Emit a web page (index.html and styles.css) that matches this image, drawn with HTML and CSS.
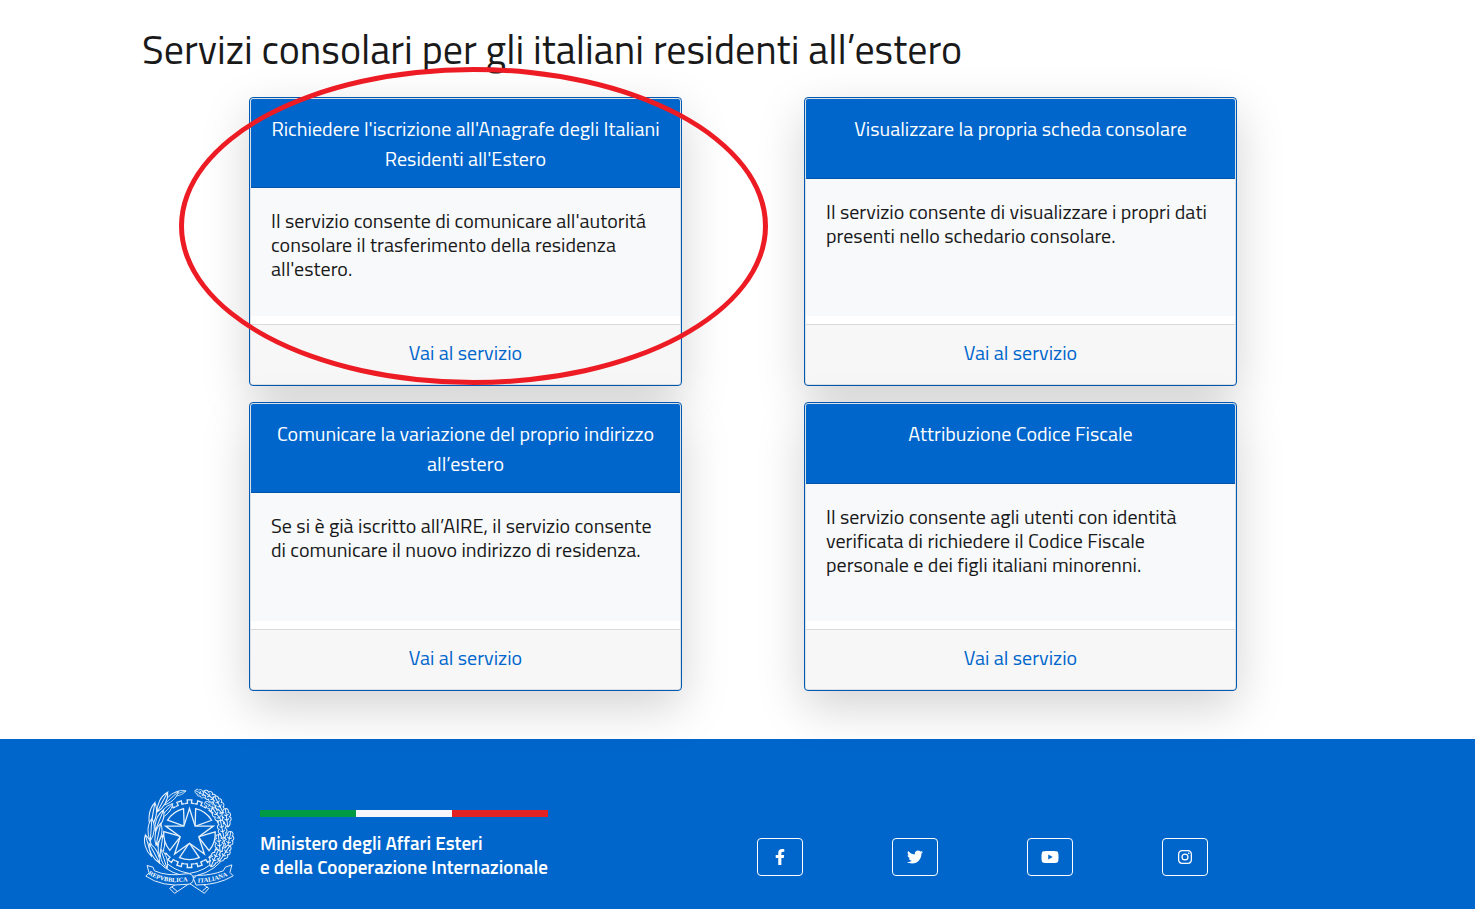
FILE: index.html
```
<!DOCTYPE html>
<html lang="it">
<head>
  <meta charset="UTF-8">
  <meta name="viewport" content="width=device-width, initial-scale=1.0">
  <title>Servizi consolari</title>
  <link rel="stylesheet" href="styles.css">
</head>
<body>
  <main class="container">
    <h1>Servizi consolari per gli italiani residenti all’estero</h1>

    <div class="services">
      <article class="card highlighted">
        <h2 class="card-header">Richiedere l'iscrizione all'Anagrafe degli Italiani Residenti all'Estero</h2>
        <p class="card-body">Il servizio consente di comunicare all'autoritá consolare il trasferimento della residenza all'estero.</p>
        <div class="card-footer"><a href="#">Vai al servizio</a></div>
      </article>

      <article class="card">
        <h2 class="card-header">Visualizzare la propria scheda consolare</h2>
        <p class="card-body">Il servizio consente di visualizzare i propri dati presenti nello schedario consolare.</p>
        <div class="card-footer"><a href="#">Vai al servizio</a></div>
      </article>

      <article class="card">
        <h2 class="card-header">Comunicare la variazione del proprio indirizzo all’estero</h2>
        <p class="card-body">Se si è già iscritto all’AIRE, il servizio consente di comunicare il nuovo indirizzo di residenza.</p>
        <div class="card-footer"><a href="#">Vai al servizio</a></div>
      </article>

      <article class="card">
        <h2 class="card-header">Attribuzione Codice Fiscale</h2>
        <p class="card-body">Il servizio consente agli utenti con identità verificata di richiedere il Codice Fiscale personale e dei figli italiani minorenni.</p>
        <div class="card-footer"><a href="#">Vai al servizio</a></div>
      </article>
    </div>
  </main>

  <footer class="footer">
    <div class="container footer-row">
      <div class="brand">
        <svg class="emblem" viewBox="40 22 273 323" aria-hidden="true">
          <defs>
            <path id="tooth" d="M-14 -91 L-6 -92 L-7 -102 L7 -102 L6 -92 L14 -91"/>
            <g id="teeth">
              <use href="#tooth"/>
              <use href="#tooth" transform="rotate(18)"/>
            </g>
            <path id="wedge" d="M-66 -41 A78 78 0 0 1 -18 -76 L-16 -23 Z"/>
            <path id="leaf" d="M0 -34 C13 -15 12 14 0 34 C-12 14 -13 -15 0 -34 V34"/>
            <path id="oak" d="M0 -28 C8 -28 10 -20 7 -16 C15 -14 15 -5 9 -2 C16 2 14 10 8 12 C10 19 5 25 0 28 C-5 25 -10 19 -8 12 C-14 10 -16 2 -9 -2 C-15 -5 -15 -14 -7 -16 C-10 -20 -8 -28 0 -28 V28 M0 -6 L7 -10 M0 -6 L-7 -10 M0 8 L7 3 M0 8 L-7 3"/>
            <path id="ribbon-left" d="M53 282 Q105 316 182 302"/>
            <path id="ribbon-right" d="M203 307 Q250 309 306 281"/>
          </defs>
          <!-- gear and star -->
          <g class="gear" transform="translate(178 160)">
            <use href="#teeth"/>
            <use href="#teeth" transform="rotate(36)"/>
            <use href="#teeth" transform="rotate(72)"/>
            <use href="#teeth" transform="rotate(108)"/>
            <use href="#teeth" transform="rotate(144)"/>
            <use href="#teeth" transform="rotate(180)"/>
            <use href="#teeth" transform="rotate(216)"/>
            <use href="#teeth" transform="rotate(252)"/>
            <use href="#teeth" transform="rotate(288)"/>
            <use href="#teeth" transform="rotate(324)"/>
            <use href="#wedge"/>
            <use href="#wedge" transform="rotate(72)"/>
            <use href="#wedge" transform="rotate(144)"/>
            <use href="#wedge" transform="rotate(216)"/>
            <use href="#wedge" transform="rotate(288)"/>
            <path d="M0 -76 L17 -23 L72 -23 L28 9 L45 61 L0 29 L-45 61 L-28 9 L-72 -23 L-17 -23 Z"/>
          </g>
          <!-- stems -->
          <path d="M84 245 Q120 285 190 292 L236 325 L223 340 L172 306 M272 245 Q236 285 168 292 L118 325 L133 340 L184 306 M124 320 L140 333 M232 320 L217 333 M100 240 Q130 272 178 280 M256 240 Q226 272 178 280"/>
          <!-- laurel -->
          <use href="#leaf" transform="translate(145 38) rotate(72) scale(.7)"/>
          <use href="#leaf" transform="translate(122 53) rotate(48) scale(.9)"/>
          <use href="#leaf" transform="translate(96 65) rotate(28)"/>
          <use href="#leaf" transform="translate(107 92) rotate(42) scale(.9)"/>
          <use href="#leaf" transform="translate(67 103) rotate(10) scale(1.1)"/>
          <use href="#leaf" transform="translate(87 120) rotate(22)"/>
          <use href="#leaf" transform="translate(62 148) rotate(4)"/>
          <use href="#leaf" transform="translate(84 162) rotate(12)"/>
          <use href="#leaf" transform="translate(54 196) rotate(-16)"/>
          <use href="#leaf" transform="translate(93 197) rotate(8)"/>
          <use href="#leaf" transform="translate(72 219) rotate(-28)"/>
          <use href="#leaf" transform="translate(101 236) rotate(-18) scale(.9)"/>
          <!-- oak -->
          <use href="#oak" transform="translate(215 40) rotate(-62) scale(.8)"/>
          <use href="#oak" transform="translate(243 50) rotate(-50)"/>
          <use href="#oak" transform="translate(243 78) rotate(-55) scale(.8)"/>
          <use href="#oak" transform="translate(267 72) rotate(-28)"/>
          <use href="#oak" transform="translate(264 106) rotate(-35)"/>
          <use href="#oak" transform="translate(290 112) rotate(-8)"/>
          <use href="#oak" transform="translate(277 147) rotate(-12)"/>
          <use href="#oak" transform="translate(297 181) rotate(12)"/>
          <use href="#oak" transform="translate(268 190) rotate(-6)"/>
          <use href="#oak" transform="translate(284 220) rotate(34)"/>
          <use href="#oak" transform="translate(254 234) rotate(24)"/>
          <!-- ribbon -->
          <path d="M50 256 L68 261 L72 272 Q112 290 168 281 Q188 278 190 296 Q188 314 168 313 Q96 322 46 288 L56 278 Z"/>
          <path d="M306 254 L286 261 L280 272 Q244 286 200 286 L190 296 L198 315 Q264 315 310 287 L300 277 Z"/>
          <text><textPath href="#ribbon-left">REPVBBLICA</textPath></text>
          <text><textPath href="#ribbon-right">ITALIANA</textPath></text>
        </svg>
        <div class="ministry">
          <div class="flag"><span class="green"></span><span class="white"></span><span class="red"></span></div>
          <p>Ministero degli Affari Esteri<br>e della Cooperazione Internazionale</p>
        </div>
      </div>

      <nav class="social" aria-label="Social">
        <a href="#" aria-label="Facebook">
          <svg viewBox="0 0 320 512"><path d="M279 288l14-93h-89v-60c0-25 12-50 52-50h41V7s-37-7-72-7c-73 0-121 44-121 125v70H23v93h81v224h100V288z"/></svg>
        </a>
        <a href="#" aria-label="Twitter">
          <svg viewBox="0 0 512 512"><path d="M459 152c1 4 1 9 1 14 0 138-106 298-299 298-59 0-115-17-161-47 8 1 16 1 25 1 49 0 94-16 130-45-46-1-85-31-98-73 7 1 13 2 20 2 9 0 19-1 27-4-48-10-84-52-84-103v-1c14 8 30 13 47 13-28-19-46-51-46-87 0-19 5-37 14-53 52 64 129 105 216 110-2-8-3-16-3-24 0-58 47-105 105-105 30 0 58 13 77 33 24-5 46-13 66-25-8 24-24 45-46 58 21-2 42-8 60-16-14 21-32 39-52 54z"/></svg>
        </a>
        <a href="#" aria-label="YouTube">
          <svg viewBox="0 0 576 512"><path fill-rule="evenodd" d="M550 124c-6-24-25-42-49-49-42-11-213-11-213-11S117 64 75 75c-24 7-43 25-49 49-11 43-11 132-11 132s0 90 11 133c6 23 25 41 49 48 42 11 213 11 213 11s171 0 213-11c24-7 43-25 49-48 11-43 11-133 11-133s0-89-11-132zM232 338V175l143 81z"/></svg>
        </a>
        <a href="#" aria-label="Instagram">
          <svg viewBox="0 0 448 512"><path fill-rule="evenodd" d="M130 32h188c72 0 130 58 130 130v188c0 72-58 130-130 130H130C58 480 0 422 0 350V162C0 90 58 32 130 32zm5 40c-54 0-94 40-94 94v180c0 54 40 94 94 94h178c54 0 94-40 94-94V166c0-54-40-94-94-94zM224 141a115 115 0 1 1 0 230 115 115 0 0 1 0-230zm0 40a75 75 0 1 0 0 150 75 75 0 0 0 0-150zM344 109a27 27 0 1 1 0 54 27 27 0 0 1 0-54z"/></svg>
        </a>
      </nav>
    </div>
  </footer>
</body>
</html>
```
FILE: styles.css
```
* {
  box-sizing: border-box;
}
body {
  margin: 0;
  font-family: 'Titillium Web', 'Noto Sans', sans-serif;
  font-size: 20px;
  line-height: 24px;
  color: #19191a;
  background-color: #fff;
}
h1, h2, p {
  margin: 0;
  font-weight: 400;
}
a {
  color: #06c;
  text-decoration: none;
}
.container {
  max-width: 1191px;
  margin: 0 auto;
}
h1 {
  padding: 26px 0 23px;
  font-size: 40px;
  line-height: 48px;
}

/* service cards */
.services {
  display: grid;
  grid-template-columns: 1fr 1fr;
  gap: 16px 122px;
  padding: 0 96px 48px 107px;
}
.card {
  display: flex;
  flex-direction: column;
  min-height: 289px;
  padding: 1px;
  border: 1px solid #0059b3;
  border-radius: 4px;
  background-color: #fff;
  background-clip: padding-box;
  box-shadow: inset 0 0 0 1px #dcdfe3, 0 16px 48px rgba(0, 0, 0, 0.175);
  position: relative;
}
.card-header {
  min-height: 80px;
  padding: 15px 16px 13px;
  border-bottom: 1px solid #0055ab;
  border-radius: 2px 2px 0 0;
  background-color: #06c;
  color: #fff;
  font-size: 20px;
  line-height: 30px;
  text-align: center;
}
.card-body {
  flex: 1;
  padding: 21px 20px;
  margin-bottom: 8px;
  background-color: #f8f9fb;
}
.card-footer {
  padding: 16px 20px 19px;
  border-top: 1px solid #d9dadb;
  border-radius: 0 0 2px 2px;
  background-color: #f7f7f7;
  text-align: center;
}
.highlighted::after {
  content: '';
  position: absolute;
  inset: -31px -87px 0 -71px;
  border: 5px solid #ed1c24;
  border-radius: 50%;
  pointer-events: none;
  z-index: 1;
}

/* footer */
.footer {
  padding: 49px 0 14px;
  background-color: #06c;
  color: #fff;
}
.footer-row {
  display: flex;
  justify-content: space-between;
}
.brand {
  display: flex;
  gap: 24px;
}
.emblem {
  width: 94px;
  height: 107px;
  fill: #06c;
  stroke: #e6f0fa;
  stroke-width: 3;
}
.gear {
  stroke-width: 4;
}
.emblem text {
  fill: #fff;
  stroke: none;
  font-family: 'Liberation Serif', serif;
  font-size: 19px;
  font-weight: 700;
}
.ministry {
  padding-top: 22px;
}
.ministry p {
  padding-top: 14px;
  font-size: 19px;
  font-weight: 600;
}
.flag {
  display: flex;
  height: 7px;
}
.flag span {
  flex: 1;
}
.green {
  background-color: #009a44;
}
.white {
  background-color: #f7f7fb;
}
.red {
  background-color: #e32223;
}
.social {
  display: flex;
  gap: 89px;
  padding: 50px 125px 0 0;
}
.social a {
  display: flex;
  align-items: center;
  justify-content: center;
  width: 46px;
  height: 38px;
  border: 1px solid #fff;
  border-radius: 4px;
}
.social svg {
  height: 16px;
  fill: #fff;
}
```
